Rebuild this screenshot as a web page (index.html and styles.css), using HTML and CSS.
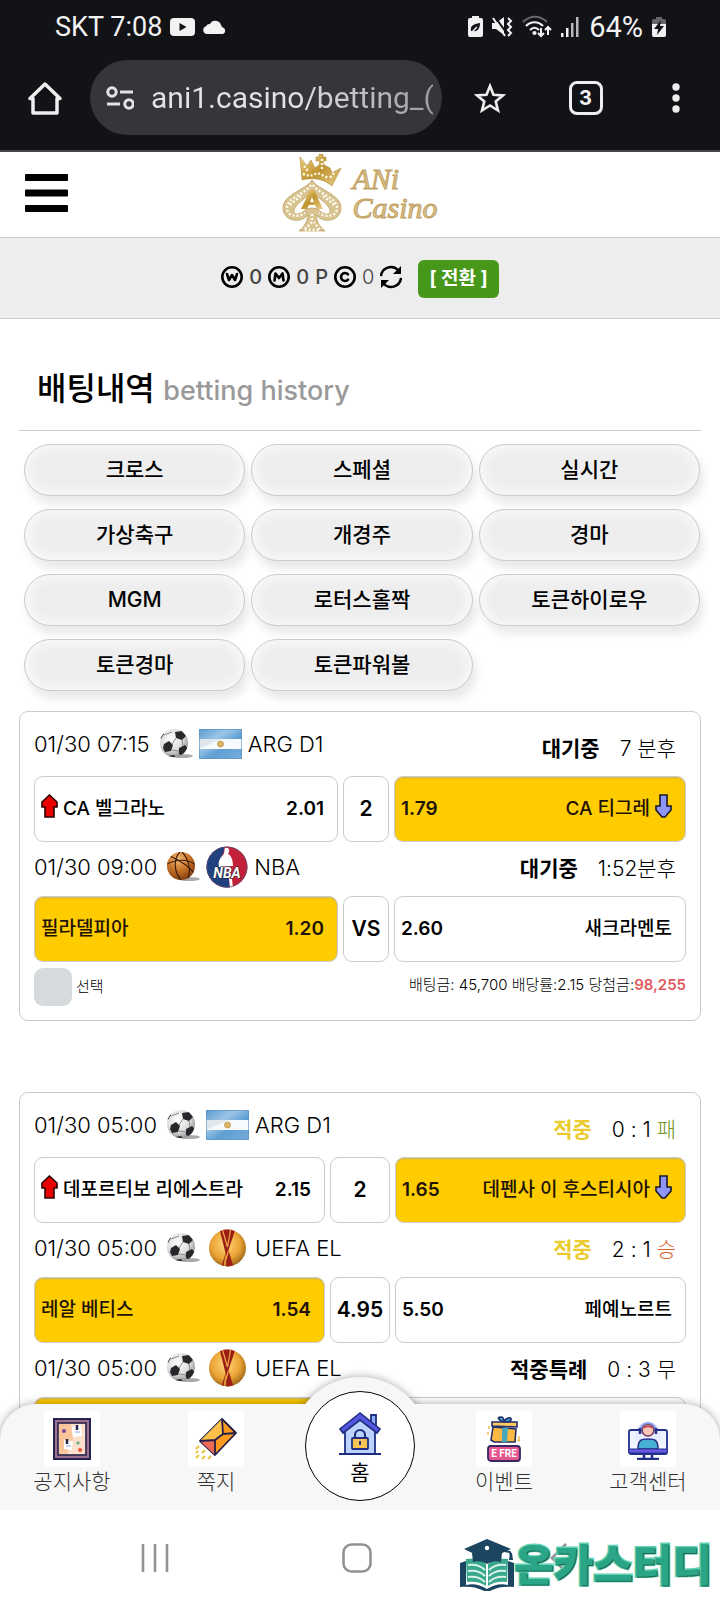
FILE: index.html
```html
<!DOCTYPE html>
<html lang="ko">
<head>
<meta charset="utf-8">
<meta name="viewport" content="width=device-width, initial-scale=1">
<title>배팅내역</title>
<link rel="stylesheet" href="styles.css">
</head>
<body>
<svg class="sprite" width="0" height="0" aria-hidden="true">
  <defs>
    <radialGradient id="g-ball" cx=".4" cy=".35" r=".7"><stop offset="0" stop-color="#fff"/><stop offset=".6" stop-color="#dcdcdc"/><stop offset="1" stop-color="#8a8a8a"/></radialGradient>
    <radialGradient id="g-basket" cx=".4" cy=".25" r=".8"><stop offset="0" stop-color="#f3b877"/><stop offset=".5" stop-color="#c8742a"/><stop offset="1" stop-color="#7a3a0c"/></radialGradient>
    <radialGradient id="g-uefa" cx=".45" cy=".4" r=".65"><stop offset="0" stop-color="#ffd77a"/><stop offset=".6" stop-color="#eba436"/><stop offset="1" stop-color="#8f5a14"/></radialGradient>
    <linearGradient id="g-flag" x1="0" y1="0" x2="1" y2="1"><stop offset="0" stop-color="#5b9bcf"/><stop offset=".35" stop-color="#9cc5e6"/><stop offset=".6" stop-color="#5f9fd3"/><stop offset="1" stop-color="#78addb"/></linearGradient>
    <linearGradient id="g-gold" x1="0" y1="0" x2="1" y2="1"><stop offset="0" stop-color="#f0d68a"/><stop offset=".5" stop-color="#c1942f"/><stop offset="1" stop-color="#e8cf8c"/></linearGradient>
    <clipPath id="c-nba"><circle cx="21" cy="21" r="20.5"/></clipPath>
    <clipPath id="c-ball"><circle cx="15" cy="14" r="14"/></clipPath>
    <clipPath id="c-uefa"><circle cx="19" cy="19" r="18.5"/></clipPath>
    <symbol id="soccer" viewBox="0 0 34 30">
      <ellipse cx="23" cy="27" rx="11" ry="2" fill="#aaa"/>
      <circle cx="15" cy="14" r="14" fill="url(#g-ball)"/>
      <g clip-path="url(#c-ball)" fill="#26282b"><path d="M16 3l7-1 4 5-4 4-6-2zM5 15l5-3 4 4-2 6-6 1-2-4zM20 19l6-3 4 5-5 6-5-2zM-1 6l4-4 2 3-3 5zM9 27l6-1 3 4H9z"/><path d="M17 9l-4 6M23 11l1 6M13 21l7 1M5 6l8-3" stroke="#888" stroke-width="1" fill="none"/></g>
    </symbol>
    <symbol id="basket" viewBox="0 0 34 30">
      <ellipse cx="23" cy="27" rx="11" ry="2" fill="#aaa"/>
      <circle cx="15" cy="14" r="14" fill="url(#g-basket)"/>
      <g clip-path="url(#c-ball)" fill="none" stroke="#3b1c08" stroke-width="1.1"><path d="M1 12c8-4 19-6 29 1M14 0c-7 7-6 20 1 28M16 0c7 7 9 18 6 27M4 4c9 4 18 9 25 18"/></g>
    </symbol>
    <symbol id="flag-ar" viewBox="0 0 43 30">
      <rect width="43" height="30" fill="url(#g-flag)"/><rect y="10" width="43" height="10" fill="#f7fafc"/><path d="M0 10h22L0 20z" fill="#dfe6ec"/>
      <circle cx="21.500" cy="15" r="3" fill="#d9b768" stroke="#b79048" stroke-width=".8"/><path d="M.5 .5h42v29H.5z" fill="none" stroke="#5a8fbd" stroke-opacity=".6"/>
    </symbol>
    <symbol id="nba" viewBox="0 0 42 42">
      <g clip-path="url(#c-nba)"><rect width="42" height="42" fill="#c4203a"/><path d="M0 0h19c-2 3 0 6-3 9l-3 9 9 8 2 16H0z" fill="#20407e"/>
      <path d="M19 2c3-1 5 1 4 4l-1 2c3 1 5 6 5 12l-14 1c-1-4 0-8 4-12 2-2 1-5 2-7zM23 32l3 1 1 9h-3z" fill="#fff"/></g>
      <text x="21" y="32" text-anchor="middle" class="nba-text">NBA</text>
      <circle cx="21" cy="21" r="20" fill="none" stroke="#4d5675" stroke-opacity=".7"/>
    </symbol>
    <symbol id="uefa" viewBox="0 0 38 38">
      <circle cx="19" cy="19" r="18.500" fill="url(#g-uefa)"/>
      <g clip-path="url(#c-uefa)"><path d="M11 0h16l-7 21 5 17h-7l-1-14z" fill="#9c1f17"/><path d="M14 1l5 17 3-17M20 22l-5 16" stroke="#f0a94a" stroke-width="1.200" fill="none"/><path d="M17 24l-2 14h-2z" fill="#9c1f17"/></g>
    </symbol>
    <symbol id="up" viewBox="0 0 17 24"><path d="M8.500 1L16 8v5h-3v10H4V13H1V8z" fill="#e80000" stroke="#2b0000" stroke-width="1.600"/></symbol>
    <symbol id="down" viewBox="0 0 17 24"><path d="M5 1h7v11h4v4l-6 7H7l-6-7v-4h4z" fill="#8f95f5" stroke="#17172e" stroke-width="1.600"/></symbol>
  </defs>
</svg>

<div class="phone">
  <header class="chrome">
    <div class="status">
      <span>SKT 7:08</span>
      <svg width="25" height="18" viewBox="0 0 25 18"><rect width="25" height="18" rx="4" fill="#f2f2f2"/><path d="M9.500 5l7 4-7 4z" fill="#121317"/></svg>
      <svg width="24" height="14" viewBox="0 0 24 14"><path d="M4 14a4 4 0 0 1-1-7.800A4 4 0 0 1 7 4a6 6 0 0 1 11 1c1 2 1 2 2 2.500A3.500 3.500 0 0 1 20 14z" fill="#f2f2f2"/></svg>
      <div class="status-right">
        <svg width="15" height="21" viewBox="0 0 15 21"><path d="M4 0h7v2h2a2 2 0 0 1 2 2v15a2 2 0 0 1-2 2H2a2 2 0 0 1-2-2V4a2 2 0 0 1 2-2h2z" fill="#f2f2f2"/><path d="M3 15c-1-5 2-7 9-8 0 6-3 9-7 8z" fill="#121317"/><path d="M3 17l6-6" fill="none" stroke="#f2f2f2" stroke-width="1.400"/></svg>
        <svg width="21" height="20" viewBox="0 0 21 20"><path d="M0 6h4l8-6v18l-8-6H0z" fill="#f2f2f2"/><path d="M3 0l13 18" stroke="#121317" stroke-width="2"/><path d="M1 1l12 18" stroke="#f2f2f2" stroke-width="2"/><path d="M16 1l3 3-3 3 3 3-3 3 3 3-3 3" fill="none" stroke="#f2f2f2" stroke-width="2"/></svg>
        <svg width="30" height="23" viewBox="0 0 30 23" fill="none" stroke="#f2f2f2" stroke-width="2.200"><path d="M1 7c7-7 17-7 24 0" stroke="#66676b"/><path d="M4 11c5-5 12-5 17 0M8 15c3-3 6-3 9 0"/><circle cx="12.500" cy="18" r="1" fill="#f2f2f2"/><path d="M19 13v8m-3-3l3 3 3-3M26 20v-8m-3 3l3-3 3 3" stroke-width="2"/></svg>
        <svg width="19" height="20" viewBox="0 0 19 20" fill="#f2f2f2"><rect y="16" width="2.500" height="4"/><rect x="5" y="11" width="2.500" height="9"/><rect x="10" y="6" width="2.500" height="14" fill="#b8b8bb"/><rect x="15" width="2.500" height="20" fill="#b8b8bb"/></svg>
        <span class="percent">64%</span>
        <svg width="14" height="20" viewBox="0 0 14 20"><path d="M4 0h6v2h2a2 2 0 0 1 2 2v14a2 2 0 0 1-2 2H2a2 2 0 0 1-2-2V4a2 2 0 0 1 2-2h2z" fill="#66676b"/><path d="M0 7h14v11a2 2 0 0 1-2 2H2a2 2 0 0 1-2-2z" fill="#f2f2f2"/><path d="M9 3l-7 9h4l-1 6 7-9H8z" fill="#121317"/></svg>
      </div>
    </div>
    <div class="toolbar">
      <button class="icon-btn" aria-label="홈페이지"><svg width="34" height="34" viewBox="0 0 34 34" fill="none" stroke="#eee" stroke-width="3.500" stroke-linejoin="round" stroke-linecap="round"><path d="M17 3L2 17.500h3V32h24V17.500h3z"/></svg></button>
      <div class="address">
        <svg width="28" height="24" viewBox="0 0 28 24" fill="none" stroke="#e3e3e6" stroke-width="3"><circle cx="6" cy="6" r="4.200"/><path d="M14 6h13M1 18h13"/><circle cx="23" cy="18" r="4.200"/></svg>
        <span class="url">ani1.casino/betting_(</span>
      </div>
      <div class="tools">
        <button class="icon-btn" aria-label="즐겨찾기"><svg width="32" height="32" viewBox="0 0 32 32" fill="none" stroke="#eee" stroke-width="2.600"><path d="M16 4l3.500 8.700 9.300.7-7.100 6 2.300 9.100-8-5-8 5 2.300-9.100-7.100-6 9.300-.7z"/></svg></button>
        <button class="tabs-btn" aria-label="탭 3개">3</button>
        <button class="icon-btn" aria-label="메뉴"><svg width="8" height="32" viewBox="0 0 8 32" fill="#eee"><circle cx="4" cy="5" r="3.700"/><circle cx="4" cy="16" r="3.700"/><circle cx="4" cy="27" r="3.700"/></svg></button>
      </div>
    </div>
  </header>

  <div class="viewport">
    <div class="site-head">
      <button class="burger" aria-label="전체 메뉴"><svg width="43" height="38" viewBox="0 0 43 38"><rect width="43" height="7" rx="1"/><rect y="15.500" width="43" height="7" rx="1"/><rect y="31" width="43" height="7" rx="1"/></svg></button>
      <a class="logo" href="#">
        <svg width="60" height="78" viewBox="0 0 60 78">
          <g stroke="#b08c3c" stroke-width=".6">
          <path d="M37 0h4v3h3v4h-3l1 4 6 3 2 5 9-5-9 18c-8-7-19-9-30-6L18 3l7 9 4-6 4 8 4-3 1-4h-4V3h3z" fill="url(#g-gold)"/>
          <path fill-rule="evenodd" d="M30 26C24 36 1 40 1 54c0 12 16 17 25 7-1 7-3 11-9 16h26c-6-5-8-9-9-16 9 10 25 5 25-7 0-14-23-18-29-28zm0 11c5 7 16 12 18 19 1 6-7 5-12-1l-6-1-6 1c-5 6-13 7-12 1 2-7 13-12 18-19z" fill="#d9c494"/></g>
          <path d="M29 31C23 40 5 44 5 54c0 8 10 10 18 5M31 31c6 9 24 13 24 23 0 8-10 10-18 5M30 60v8l-8 8h16l-6-8M8 51l12-10M52 51L40 41M21 20l7 2 8-3 10 5M22 12l4 5M40 5v10M52 19l-5 6" fill="none" stroke="#fffbee" stroke-width="2.400" stroke-dasharray="2 2"/>
          <path d="M28 36h4l9 19h-6l-2-4h-6l-2 4h-6zm2 7l-2 5h4z" fill="url(#g-gold)"/>
        </svg>
        <span class="logo-text"><span>ANi</span><span>Casino</span></span>
      </a>
    </div>

    <div class="wallet">
      <svg width="22" height="22" viewBox="0 0 22 22" fill="none" stroke="#000" stroke-width="2.600" stroke-linejoin="round" stroke-linecap="round"><circle cx="11" cy="11" r="9.700"/><path d="M6 8l2 6 3-5 3 5 2-6"/></svg>
      <span class="coin">0</span>
      <svg width="22" height="22" viewBox="0 0 22 22" fill="none" stroke="#000" stroke-width="2.600" stroke-linejoin="round" stroke-linecap="round"><circle cx="11" cy="11" r="9.700"/><path d="M6.500 14.500l1-7L11 12l3.500-4.500 1 7"/></svg>
      <span class="coin">0</span>
      <span class="coin">P</span>
      <svg width="22" height="22" viewBox="0 0 22 22" fill="none" stroke="#000" stroke-width="2.600" stroke-linecap="round"><circle cx="11" cy="11" r="9.700"/><path d="M14 8.300a4 4 0 1 0 0 5.400"/></svg>
      <span class="coin thin">0</span>
      <button class="reload" aria-label="새로고침"><svg width="22" height="24" viewBox="0 0 22 24"><path d="M1 11A10 10 0 0 1 18 5M21 13A10 10 0 0 1 4 19" fill="none" stroke="#000" stroke-width="2.400"/><path d="M21 1v8h-8zM1 23v-8h8z"/></svg></button>
      <button class="swap">[ 전환 ]</button>
    </div>

    <main class="page">
      <h1 class="title">배팅내역 <small>betting history</small></h1>
      <nav class="cats">
        <a href="#">크로스</a><a href="#">스페셜</a><a href="#">실시간</a>
        <a href="#">가상축구</a><a href="#">개경주</a><a href="#">경마</a>
        <a href="#">MGM</a><a href="#">로터스홀짝</a><a href="#">토큰하이로우</a>
        <a href="#">토큰경마</a><a href="#">토큰파워볼</a>
      </nav>

      <section class="slip">
        <div class="meta"><span>01/30 07:15</span><svg class="ball" width="34" height="30"><use href="#soccer"/></svg><svg class="league-img" width="43" height="30"><use href="#flag-ar"/></svg><span>ARG D1</span><span class="state"><b>대기중</b><span>7 분후</span></span></div>
        <div class="odds wide">
          <div class="pick"><span class="team"><svg width="17" height="24"><use href="#up"/></svg>CA 벨그라노</span><span class="rate">2.01</span></div>
          <div class="pick mid">2</div>
          <div class="pick away on"><span>1.79</span><span class="team">CA 티그레<svg width="17" height="24"><use href="#down"/></svg></span></div>
        </div>
        <div class="meta"><span>01/30 09:00</span><svg class="ball" width="34" height="30"><use href="#basket"/></svg><svg class="league-img" width="42" height="42"><use href="#nba"/></svg><span>NBA</span><span class="state"><b>대기중</b><span>1:52분후</span></span></div>
        <div class="odds wide">
          <div class="pick on"><span class="team">필라델피아</span><span class="rate">1.20</span></div>
          <div class="pick mid">VS</div>
          <div class="pick away"><span>2.60</span><span class="team">새크라멘토</span></div>
        </div>
        <div class="foot">
          <label class="choose"><input type="checkbox">선택</label>
          <p class="sum">배팅금: 45,700 배당률:2.15 당첨금:<b>98,255</b></p>
        </div>
      </section>

      <section class="slip">
        <div class="meta"><span>01/30 05:00</span><svg class="ball" width="34" height="30"><use href="#soccer"/></svg><svg class="league-img" width="43" height="30"><use href="#flag-ar"/></svg><span>ARG D1</span><span class="state"><b class="hit">적중</b><span>0 : 1 <i class="lose">패</i></span></span></div>
        <div class="odds">
          <div class="pick"><span class="team"><svg width="17" height="24"><use href="#up"/></svg>데포르티보 리에스트라</span><span class="rate">2.15</span></div>
          <div class="pick mid">2</div>
          <div class="pick away on"><span>1.65</span><span class="team">데펜사 이 후스티시아<svg width="17" height="24"><use href="#down"/></svg></span></div>
        </div>
        <div class="meta"><span>01/30 05:00</span><svg class="ball" width="34" height="30"><use href="#soccer"/></svg><svg class="league-img" width="43" height="38"><use href="#uefa"/></svg><span>UEFA EL</span><span class="state"><b class="hit">적중</b><span>2 : 1 <i class="win">승</i></span></span></div>
        <div class="odds">
          <div class="pick on"><span class="team">레알 베티스</span><span class="rate">1.54</span></div>
          <div class="pick mid">4.95</div>
          <div class="pick away"><span>5.50</span><span class="team">페예노르트</span></div>
        </div>
        <div class="meta"><span>01/30 05:00</span><svg class="ball" width="34" height="30"><use href="#soccer"/></svg><svg class="league-img" width="43" height="38"><use href="#uefa"/></svg><span>UEFA EL</span><span class="state"><b>적중특례</b><span>0 : 3 무</span></span></div>
        <div class="odds">
          <div class="pick on"></div><div class="pick mid"></div><div class="pick away"></div>
        </div>
      </section>
    </main>

    <nav class="dock">
      <a href="#"><span class="tile"><svg width="38" height="42" viewBox="0 0 38 42"><rect x="1" y="1" width="36" height="40" fill="#9c7290" stroke="#262350" stroke-width="2"/><rect x="5" y="5" width="28" height="32" fill="#f9c59b" stroke="#262350" stroke-width="1.600"/><path d="M18 6h14v30H14l6-12z" fill="#fde0cc"/><path d="M19 9l9-2 1 11-9 1zM11 22l9 1-1 9-8-1z" fill="#fff"/><path d="M24 7v5M14 21v5" stroke="#262350" stroke-width="2.500"/><path d="M22 14h5M13 28h5" stroke="#8aa8e8"/><circle cx="11" cy="13" r="2" fill="#7a4a9a"/><circle cx="25" cy="25" r="1.800" fill="#7ab58a"/><circle cx="27" cy="32" r="2" fill="#e8543a"/></svg></span>공지사항</a>
      <a href="#"><span class="tile"><svg width="42" height="42" viewBox="0 0 42 42"><path d="M27 1l14 14-21 22L5 23z" fill="#fb9a1e" stroke="#22204a" stroke-width="1.800" stroke-linejoin="round"/><path d="M27 1l1 15-8 6L5 23z" fill="#fdc14c"/><path d="M5 23l15-1 0 15z" fill="#ef6a55"/><path d="M27 1l1 15 13-1M5 23l15-1v15M20 22l8-6" fill="none" stroke="#22204a" stroke-width="1.800"/><path d="M1 31l3-3M7 35l3-3M1 40l3-3M7 41l3-3M13 41l3-3M1 35l2-2" stroke="#e9c53c" stroke-width="2"/></svg></span>쪽지</a>
      <a class="home" href="#"><svg width="42" height="43" viewBox="0 0 42 43"><path d="M32 3h5v14h-5z" fill="#8fb0ff" stroke="#1e2f80" stroke-width="1.800"/><path d="M6 18L21 6l15 12v24H6z" fill="#bcd3ff" stroke="#1e2f80" stroke-width="1.800"/><path d="M21 1L1 17l3 4L21 8l17 13 3-4z" fill="#5456e0" stroke="#1e2f80" stroke-width="1.600"/><path d="M16 27v-4a5 5 0 0 1 10 0v4" fill="none" stroke="#1e2f80" stroke-width="2.200"/><rect x="13" y="26" width="16" height="11" rx="1" fill="#fbc34f" stroke="#1e2f80" stroke-width="1.800"/><path d="M21 29v4M0 42h42" stroke="#1e2f80" stroke-width="2"/></svg>홈</a>
      <a href="#"><span class="tile"><svg width="36" height="46" viewBox="0 0 36 46"><path d="M7 11l23 2-1 13H8L5 24z" fill="#fdb942" stroke="#22306a" stroke-width="1.600"/><path d="M16 12h6l-1 14h-5z" fill="#4aa7b8"/><path d="M6 6h25v5l-25-1z" fill="#fdc960" stroke="#22306a" stroke-width="1.600"/><path d="M18 6c-5-1-8-5-3-5 2 0 3 2 3 5 1-4 8-6 7-2 0 2-4 2-7 2z" fill="#3c9bd0" stroke="#22306a" stroke-width="1.600"/><path d="M3 10v3M2 16v3M33 20v4M31 24l3 1" stroke="#edc267" stroke-width="1.600"/><rect x="2" y="30" width="32" height="15" rx="3" fill="#e5568f" stroke="#3b2664" stroke-width="1.800"/><text x="18" y="41" text-anchor="middle" class="free-text">E FRE</text></svg></span>이벤트</a>
      <a href="#"><span class="tile"><svg width="42" height="42" viewBox="0 0 42 42"><circle cx="21" cy="17" r="13" fill="#dfe5ff"/><rect x="2" y="12" width="38" height="24" rx="2" fill="#e9f0ff" fill-opacity=".7" stroke="#22308a" stroke-width="1.800"/><path d="M11 31c0-9 3-10 10-10s10 1 10 10z" fill="#49afd2" stroke="#22308a" stroke-width="1.500"/><path d="M2 31h38v4H2z" fill="#6c5ae6" stroke="#22308a"/><circle cx="21" cy="12" r="6" fill="#f8c7b4" stroke="#6b3a5c" stroke-width="1.500"/><path d="M15 11c1-5 11-5 12 0l-6-2z" fill="#b84e58"/><path d="M13 13a8 8 0 1 1 16 0" fill="none" stroke="#8b9bea" stroke-width="2"/><path d="M13 10v6M29 10v6M17 36v4M25 36v4M10 41h22" stroke="#22308a" stroke-width="2.500"/></svg></span>고객센터</a>
    </nav>
  </div>

  <footer class="sysbar">
    <button aria-label="최근 앱"><svg width="28" height="28" viewBox="0 0 28 28" stroke="#929292" stroke-width="2.600"><path d="M2 0v28M14 0v28M26 0v28"/></svg></button>
    <button class="sys-home" aria-label="홈"><svg width="30" height="30" viewBox="0 0 30 30"><rect x="1.500" y="1.500" width="27" height="27" rx="8" fill="none" stroke="#929292" stroke-width="2.600"/></svg></button>
    <button aria-label="뒤로"><svg width="18" height="30" viewBox="0 0 18 30"><path d="M16 1L2 15l14 14" fill="none" stroke="#929292" stroke-width="2.600"/></svg></button>
    <div class="mark">
      <svg width="54" height="52" viewBox="0 0 54 52"><path d="M0 24l6-2v24c8-2 14 0 21 4 7-4 13-6 21-4V22l6 2v24c-9-1-16 0-22 3-3 2-7 2-10 0C16 48 9 47 0 48z" fill="#1b4560"/><path d="M6 20c9-1 16 1 20 5v22c-5-4-12-5-19-4zM48 20c-9-1-16 1-20 5v22c5-4 12-5 19-4z" fill="#3aa88c"/><path d="M8 26c7-1 13 1 17 5M8 32c7-1 13 1 17 5M8 38c7-1 13 1 17 5M46 26c-7-1-13 1-17 5M46 32c-7-1-13 1-17 5M46 38c-7-1-13 1-17 5" fill="none" stroke="#d9f3ec" stroke-width="2"/><path d="M12 14l1 9c6-2 11 0 14 2 3-2 8-4 14-2l1-9z" fill="#1b4560"/><path d="M27 0l24 10-24 11L4 10z" fill="#1b4560"/><path d="M27 9l23 4 1 4" fill="none" stroke="#1b4560" stroke-width="2"/><path d="M50 14h2l1 7h-4z" fill="#1b4560"/><circle cx="27" cy="9" r="2.200" fill="#fff"/></svg>
      <span>온카스터디</span>
    </div>
  </footer>
</div>
</body>
</html>
```
FILE: styles.css
```css
* { box-sizing: border-box; }

body {
  margin: 0;
  background: #fff;
  color: #000;
  font-family: Inter, "Noto Sans CJK KR", sans-serif;
  font-size: 21px;
  line-height: 30px;
}

button {
  border: 0;
  padding: 0;
  background: none;
  font: inherit;
  color: inherit;
}

a { color: inherit; text-decoration: none; }
svg { display: block; flex: none; }
.sprite { position: absolute; }

.phone {
  display: flex;
  flex-direction: column;
  height: 100vh;
}

/* browser chrome */
.chrome {
  flex: none;
  background: #121317;
  color: #f2f2f2;
  border-bottom: 2px solid #47484b;
}

.status {
  display: flex;
  align-items: center;
  gap: 8px;
  height: 60px;
  padding: 0 54px 7px 55px;
  font-family: Roboto, sans-serif;
  font-size: 27px;
}

.status-right {
  display: flex;
  align-items: center;
  gap: 9px;
  margin-left: auto;
}

.percent { font-size: 29px; }

.toolbar {
  display: flex;
  align-items: center;
  height: 90px;
  padding: 0 40px 15px 28px;
}

.icon-btn { display: grid; place-items: center; }

.address {
  display: flex;
  flex: 1;
  align-items: center;
  gap: 17px;
  min-width: 0;
  height: 75px;
  margin-left: 28px;
  padding: 0 8px 0 16px;
  border-radius: 38px;
  background: #35363a;
}

.url {
  flex: 1;
  overflow: hidden;
  white-space: nowrap;
  font-family: Roboto, sans-serif;
  font-size: 30px;
  line-height: 40px;
  background: linear-gradient(90deg, #e3e3e6 50%, #9b9ca0);
  background-clip: text;
  color: transparent;
}

.tools {
  display: flex;
  align-items: center;
  justify-content: space-between;
  width: 206px;
  margin-left: 32px;
}

.tabs-btn {
  width: 34px;
  height: 34px;
  margin-right: 7px;
  border: 3px solid #eee;
  border-radius: 8px;
  font-size: 20px;
  font-weight: 700;
  line-height: 28px;
}

/* page */
.viewport {
  position: relative;
  flex: 1;
  min-height: 0;
  overflow: hidden;
}

.site-head {
  display: grid;
  grid-template-columns: 1fr auto 1fr;
  align-items: center;
  height: 86px;
  padding: 0 25px 3px;
  border-bottom: 1px solid #ccc;
}

.burger { justify-self: start; }

.logo {
  display: flex;
  align-items: center;
  gap: 10px;
}

.logo-text {
  display: flex;
  flex-direction: column;
  font-family: "Liberation Serif", serif;
  font-size: 30px;
  font-style: italic;
  line-height: 29px;
  color: #d8c08a;
  -webkit-text-stroke: 1px #c2a263;
}

.wallet {
  display: flex;
  align-items: center;
  justify-content: center;
  gap: 6px;
  height: 81px;
  padding-bottom: 3px;
  border-bottom: 1px solid #ccc;
  background: #ededed;
}

.coin { font-size: 20px; font-weight: 500; color: #444; }
.coin.thin { font-weight: 300; }

.swap {
  height: 38px;
  margin: 4px 0 0 10px;
  padding: 0 11px;
  border-radius: 6px;
  background: #47971b;
  color: #fff;
  font-size: 19px;
  font-weight: 700;
}

.page { padding: 0 19px; }

.title {
  margin: 0;
  padding: 50px 18px 19px;
  border-bottom: 1px solid #ccc;
  font-size: 32px;
  font-weight: 500;
  line-height: 40px;
}

.title small {
  color: #999;
  font-size: 27px;
}

.cats {
  display: grid;
  grid-template-columns: repeat(3, 1fr);
  gap: 13px 6px;
  padding: 13px 1px 20px 5px;
}

.cats a {
  height: 52px;
  border: 1px solid #ccc;
  border-radius: 26px;
  background: #eee;
  box-shadow: 4px 8px 10px rgba(0, 0, 0, .09), inset 0 0 12px 3px rgba(255, 255, 255, .7);
  font-weight: 500;
  line-height: 50px;
  text-align: center;
}

.slip {
  margin-bottom: 71px;
  padding: 10px 14px 14px;
  border: 1px solid #ccc;
  border-radius: 9px;
}

.meta {
  display: flex;
  align-items: center;
  height: 54px;
  padding: 0 10px 4px 0;
  font-size: 22px;
  font-weight: 300;
}

.meta:first-child { padding-bottom: 10px; }
.meta:first-child .state { padding-top: 10px; }

.ball { margin: 0 6px 0 9px; }
.league-img { margin-right: 6px; }

.state {
  display: flex;
  gap: 20px;
  margin-left: auto;
  padding-top: 4px;
  font-size: 21px;
}

.state b { font-weight: 700; }
.state .hit { color: #ebcb2c; }
.state i { font-style: normal; }
.lose { color: #6e961c; }
.win { color: #d8622c; }

.odds {
  display: grid;
  grid-template-columns: 291fr 60fr 291fr;
  gap: 5px;
}

.odds.wide { grid-template-columns: 304fr 46fr 292fr; }

.pick {
  display: flex;
  align-items: center;
  justify-content: space-between;
  min-width: 0;
  height: 66px;
  padding: 0 13px 0 6px;
  border: 1px solid #ccc;
  border-radius: 9px;
  font-size: 19px;
  font-weight: 600;
  white-space: nowrap;
}

.pick.mid { justify-content: center; padding: 0; font-size: 21px; }
.pick.on { background: #fc0; color: #221308; box-shadow: inset 0 1px 2px #c8b464; }
.team { display: flex; gap: 5px; font-weight: 500; }

.foot {
  display: flex;
  align-items: center;
  justify-content: space-between;
  padding-top: 6px;
  font-size: 15px;
  font-weight: 300;
}

.choose { display: flex; align-items: center; gap: 4px; }

.choose input {
  appearance: none;
  width: 38px;
  height: 38px;
  margin: 0;
  border-radius: 9px;
  background: #d5dadd;
}

.sum { margin: 0; padding-bottom: 4px; }
.sum b { color: #e0595c; font-weight: 600; }

/* tab bar lying over the scrolled page */
.dock {
  position: absolute;
  inset: auto 0 0 0;
  display: grid;
  grid-template-columns: repeat(5, 1fr);
  height: 106px;
  border-radius: 36px 36px 0 0;
  background: #f7f7f7;
  box-shadow: 0 0 10px rgba(0, 0, 0, .35);
  color: #333;
}

.dock::before {
  content: "";
  position: absolute;
  top: -27px;
  left: calc(50% - 69px);
  width: 138px;
  height: 138px;
  border-radius: 50%;
  background: #f7f7f7;
  box-shadow: 0 0 8px rgba(0, 0, 0, .35);
  clip-path: inset(-12px -12px 111px -12px);
}

.dock a {
  display: flex;
  flex-direction: column;
  align-items: center;
  padding-top: 7px;
  font-weight: 300;
}

.tile {
  display: grid;
  place-items: center;
  width: 56px;
  height: 56px;
  background: #fff;
}

.dock .home {
  position: relative;
  justify-self: center;
  gap: 3px;
  width: 110px;
  height: 110px;
  margin-top: -13px;
  padding-top: 20px;
  border: 1px solid #000;
  border-radius: 50%;
  background: #fff;
  color: #000;
  font-weight: 400;
}

.free-text { font: 700 10px Roboto, sans-serif; fill: #fff; }
.nba-text { font: italic 700 14px Roboto, sans-serif; fill: #fff; stroke: #223; stroke-width: 1px; paint-order: stroke; }

.sysbar {
  position: relative;
  display: flex;
  flex: none;
  align-items: center;
  justify-content: space-between;
  height: 90px;
  padding: 6px 152px 0 141px;
}

.sys-home { margin-right: 6px; }

.mark {
  position: absolute;
  right: 8px;
  bottom: 8px;
  display: flex;
  align-items: center;
  color: #2aa587;
  font-size: 43px;
  font-weight: 900;
  line-height: 54px;
  -webkit-text-stroke: 3px #62d2b3;
  paint-order: stroke;
  text-shadow: 1px 1px 1px #15604c;
}
```
